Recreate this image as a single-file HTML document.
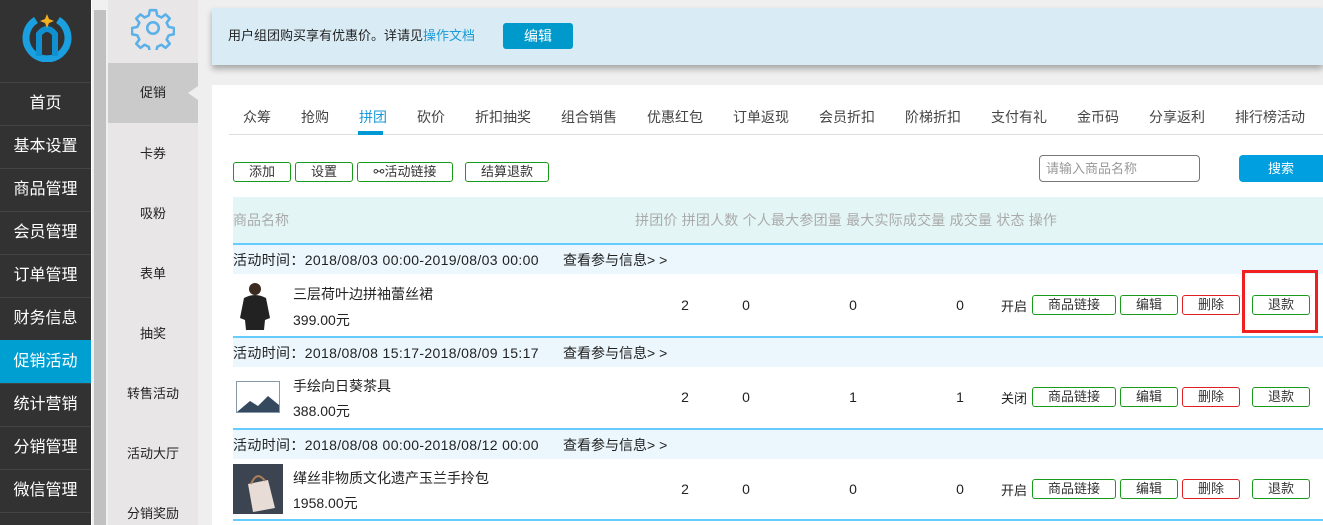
<!DOCTYPE html>
<html><head><meta charset="utf-8"><style>
*{margin:0;padding:0;box-sizing:border-box}
html,body{width:1323px;height:525px;overflow:hidden}
body{background:#efefef;font-family:"Liberation Sans","Noto Sans CJK SC",sans-serif;font-size:14px;color:#222;position:relative}
.abs{position:absolute;white-space:nowrap}
#nav{left:0;top:0;width:91px;height:525px;background:#323232;overflow:hidden}
#nav .it{position:absolute;left:0;width:91px;height:43px;line-height:42px;text-align:center;color:#fff;font-size:16px;border-top:1px solid #444}
#sb{left:91px;top:0;width:17px;height:525px;background:#f0f0f0;border-left:1px solid #fff}
#sb div{position:absolute;left:2px;top:10px;width:12px;height:515px;background:#c1c1c1}
#sub{left:108px;top:0;width:90px;height:525px;background:#e8e6e6;overflow:hidden}
#sub .it{position:absolute;left:0;width:90px;text-align:center;font-size:13px;color:#222;line-height:18px}
.btn{position:absolute;height:20px;border:1px solid #1a9a1a;border-radius:3px;text-align:center;line-height:18px;font-size:13px;color:#333;background:#fff;white-space:nowrap}
.red{border-color:#e02020}
.grp{position:absolute;left:233px;width:1090px;height:31px;background:#ebf7fd;line-height:31px;font-size:14px;letter-spacing:0.35px;border-top:2px solid #6cf}
.num{position:absolute;width:20px;text-align:center;font-size:14px}
</style></head><body>
<div id="nav" class="abs">
<svg class="abs" style="left:22px;top:12px" width="50" height="50" viewBox="0 0 50 50">
<path d="M14 8 A21 21 0 1 0 36 8" fill="none" stroke="#1aa0e0" stroke-width="7"/>
<path d="M17 44 V22 Q25 12 33 22 V44" fill="none" stroke="#1090d0" stroke-width="6"/>
<path d="M25 2 L27 7 L32 9 L27 11 L25 16 L23 11 L18 9 L23 7Z" fill="#f5b020"/>
</svg>
<div class="it" style="top:82px">首页</div>
<div class="it" style="top:125px">基本设置</div>
<div class="it" style="top:168px">商品管理</div>
<div class="it" style="top:211px">会员管理</div>
<div class="it" style="top:254px">订单管理</div>
<div class="it" style="top:297px">财务信息</div>
<div class="it" style="top:340px;background:#009fd1;border-top-color:#009fd1">促销活动</div>
<div class="it" style="top:383px">统计营销</div>
<div class="it" style="top:426px">分销管理</div>
<div class="it" style="top:469px">微信管理</div>
<div class="it" style="top:512px;height:13px"></div>
</div>
<div id="sb" class="abs"><div></div></div>
<div id="sub" class="abs">
<svg class="abs" style="left:23px;top:6px" width="44" height="44" viewBox="0 0 42 42"><path d="M18 4h6l1 5 4 2 4-3 4 4-3 4 2 4 5 1v6l-5 1-2 4 3 4-4 4-4-3-4 2-1 5h-6l-1-5-4-2-4 3-4-4 3-4-2-4-5-1v-6l5-1 2-4-3-4 4-4 4 3 4-2z" fill="none" stroke="#5ab0e8" stroke-width="2.4" stroke-linejoin="round"/><circle cx="21" cy="21" r="5.5" fill="none" stroke="#5ab0e8" stroke-width="2.4"/></svg>
<div class="it" style="top:63px;height:60px;line-height:60px;background:#cacaca">促销</div>
<div style="position:absolute;left:80px;top:86px;width:0;height:0;border:7px solid transparent;border-right:10px solid #efefef;border-left:0"></div>
<div class="it" style="top:145px">卡券</div>
<div class="it" style="top:205px">吸粉</div>
<div class="it" style="top:265px">表单</div>
<div class="it" style="top:325px">抽奖</div>
<div class="it" style="top:385px">转售活动</div>
<div class="it" style="top:445px">活动大厅</div>
<div class="it" style="top:505px">分销奖励</div>
</div>
<div class="abs" style="left:212px;top:8px;width:1111px;height:57px;background:#d9ecf5;box-shadow:0 4px 6px rgba(0,0,0,.3);font-size:13px;line-height:56px;padding-left:16px">用户组团购买享有优惠价。详请见<span style="color:#1a9ad6">操作文档</span>
<div class="abs" style="left:291px;top:15px;width:70px;height:26px;background:#0099cc;border-radius:3px;color:#fff;line-height:26px;text-align:center;font-size:14px">编辑</div></div>
<div class="abs" style="left:212px;top:85px;width:1111px;height:440px;background:#fff"></div>
<div class="abs" style="left:229px;top:134px;width:1094px;height:1px;background:#ddd"></div>
<div class="abs" style="left:358px;top:131px;width:25px;height:4px;background:#0099d6"></div>
<div class="abs" style="top:107px;left:0;width:1323px;height:20px;font-size:14px;color:#444">
<span class="abs" style="left:243px">众筹</span><span class="abs" style="left:301px">抢购</span><span class="abs" style="left:359px;color:#1a9ad6">拼团</span><span class="abs" style="left:417px">砍价</span><span class="abs" style="left:475px">折扣抽奖</span><span class="abs" style="left:561px">组合销售</span><span class="abs" style="left:647px">优惠红包</span><span class="abs" style="left:733px">订单返现</span><span class="abs" style="left:819px">会员折扣</span><span class="abs" style="left:905px">阶梯折扣</span><span class="abs" style="left:991px">支付有礼</span><span class="abs" style="left:1077px">金币码</span><span class="abs" style="left:1149px">分享返利</span><span class="abs" style="left:1235px">排行榜活动</span></div>
<div class="btn" style="left:233px;top:162px;width:58px">添加</div>
<div class="btn" style="left:295px;top:162px;width:58px">设置</div>
<div class="btn" style="left:357px;top:162px;width:96px">⚯活动链接</div>
<div class="btn" style="left:465px;top:162px;width:84px">结算退款</div>
<div class="abs" style="left:1039px;top:155px;width:161px;height:27px;border:1px solid #777;border-radius:4px;font-size:13px;color:#999;line-height:25px;padding-left:6px">请输入商品名称</div>
<div class="abs" style="left:1239px;top:155px;width:84px;height:27px;background:#00a0e0;border-radius:4px 0 0 4px;color:#fff;text-align:center;line-height:27px;font-size:13px">搜索</div>
<div class="abs" style="left:233px;top:197px;width:1090px;height:47px;background:#e4f5f5;color:#aaa;font-size:14px;line-height:46px"><span class="abs" style="left:0">商品名称</span><span class="abs" style="left:402px;letter-spacing:0.2px">拼团价 拼团人数 个人最大参团量 最大实际成交量 成交量 状态 操作</span></div>
<div class="grp" style="top:243px">活动时间：2018/08/03 00:00-2019/08/03 00:00<span class="abs" style="left:330px;letter-spacing:0">查看参与信息&gt; &gt;</span></div>
<div class="grp" style="top:336px">活动时间：2018/08/08 15:17-2018/08/09 15:17<span class="abs" style="left:330px;letter-spacing:0">查看参与信息&gt; &gt;</span></div>
<div class="grp" style="top:428px">活动时间：2018/08/08 00:00-2018/08/12 00:00<span class="abs" style="left:330px;letter-spacing:0">查看参与信息&gt; &gt;</span></div>
<div class="abs" style="left:233px;top:519px;width:1090px;height:2px;background:#6cf"></div>
<svg class="abs" style="left:238px;top:280px" width="34" height="50"><circle cx="17" cy="9" r="6" fill="#3a2a20"/><path d="M6 18 Q17 12 28 18 L32 38 L27 40 L26 50 H8 L7 40 L2 38Z" fill="#222"/></svg>
<div class="abs" style="left:293px;top:284px">三层荷叶边拼袖蕾丝裙</div><div class="abs" style="left:293px;top:310px">399.00元</div>
<svg class="abs" style="left:236px;top:381px" width="44" height="32"><rect x=".5" y=".5" width="43" height="31" fill="#fff" stroke="#8899aa"/><path d="M1 31 L14 20 L22 25 L32 15 L43 24 V31Z" fill="#34485e"/></svg>
<div class="abs" style="left:293px;top:376px">手绘向日葵茶具</div><div class="abs" style="left:293px;top:401px">388.00元</div>
<svg class="abs" style="left:233px;top:464px" width="50" height="50"><rect width="50" height="50" fill="#3b4450"/><path d="M15 20 L35 16 L42 44 L20 48Z" fill="#e8dcd6"/><path d="M18 20 Q24 6 32 17" fill="none" stroke="#b0805a" stroke-width="2"/></svg>
<div class="abs" style="left:293px;top:468px">缂丝非物质文化遗产玉兰手拎包</div><div class="abs" style="left:293px;top:493px">1958.00元</div>
<div class="num" style="left:675px;top:297px">2</div><div class="num" style="left:736px;top:297px">0</div><div class="num" style="left:843px;top:297px">0</div><div class="num" style="left:950px;top:297px">0</div>
<div class="num" style="left:675px;top:389px">2</div><div class="num" style="left:736px;top:389px">0</div><div class="num" style="left:843px;top:389px">1</div><div class="num" style="left:950px;top:389px">1</div>
<div class="num" style="left:675px;top:481px">2</div><div class="num" style="left:736px;top:481px">0</div><div class="num" style="left:843px;top:481px">0</div><div class="num" style="left:950px;top:481px">0</div>
<div class="abs" style="left:1001px;top:296px;font-size:13px">开启</div>
<div class="abs" style="left:1001px;top:388px;font-size:13px">关闭</div>
<div class="abs" style="left:1001px;top:480px;font-size:13px">开启</div>
<div class="btn" style="left:1032px;top:295px;width:84px">商品链接</div><div class="btn" style="left:1120px;top:295px;width:58px">编辑</div><div class="btn red" style="left:1182px;top:295px;width:58px">删除</div><div class="btn" style="left:1252px;top:295px;width:58px">退款</div>
<div class="btn" style="left:1032px;top:387px;width:84px">商品链接</div><div class="btn" style="left:1120px;top:387px;width:58px">编辑</div><div class="btn red" style="left:1182px;top:387px;width:58px">删除</div><div class="btn" style="left:1252px;top:387px;width:58px">退款</div>
<div class="btn" style="left:1032px;top:479px;width:84px">商品链接</div><div class="btn" style="left:1120px;top:479px;width:58px">编辑</div><div class="btn red" style="left:1182px;top:479px;width:58px">删除</div><div class="btn" style="left:1252px;top:479px;width:58px">退款</div>
<div class="abs" style="left:1242px;top:270px;width:76px;height:63px;border:3px solid #f02020"></div>
</body></html>
